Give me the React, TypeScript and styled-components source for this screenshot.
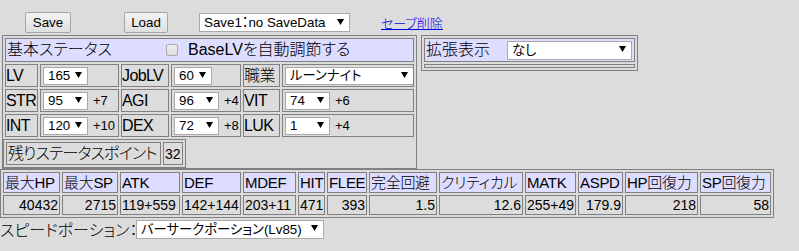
import React from 'react';
import styled, { createGlobalStyle } from 'styled-components';

const FONT = `"Liberation Sans", "Noto Sans CJK JP", sans-serif`;

const GlobalStyle = createGlobalStyle`
  html, body {
    margin: 0;
    padding: 0;
    background: #dcdcdc;
  }
  body {
    font-family: ${FONT};
    font-size: 16px;
    font-weight: 300;
    font-feature-settings: "palt";
    color: #000;
  }
`;

const Page = styled.div`
  width: 799px;
  height: 251px;
  overflow: hidden;
`;

const Toolbar = styled.div`
  display: flex;
  align-items: center;
  height: 21px;
  padding: 12px 0 0 25px;
`;

const Button = styled.button<{ $w: number; $gap?: number }>`
  box-sizing: border-box;
  flex: none;
  width: ${p => p.$w}px;
  height: 21px;
  margin: 0 0 0 ${p => p.$gap ?? 0}px;
  padding: 0;
  border: 1px solid #a6a6a6;
  border-radius: 2px;
  background: linear-gradient(#f3f3f3, #dfdfdf);
  font: 13.33px ${FONT};
  color: #000;
`;

const DeleteLink = styled.a`
  margin-left: 31px;
  font-size: 13px;
  color: #0000ee;
  text-decoration: underline;
`;

const SelectWrap = styled.span<{ $w: number; $h: number; $gap?: number }>`
  position: relative;
  display: inline-flex;
  flex: none;
  width: ${p => p.$w}px;
  height: ${p => p.$h}px;
  margin-left: ${p => p.$gap ?? 0}px;
`;

const NativeSelect = styled.select`
  appearance: none;
  box-sizing: border-box;
  width: 100%;
  height: 100%;
  margin: 0;
  padding: 0 14px 0 4px;
  border: 1px solid #a9a9a9;
  border-radius: 0;
  background: #fff;
  color: #000;
  font: 13.33px ${FONT};
  font-feature-settings: "palt";
  outline: none;
`;

const Caret = styled.svg`
  position: absolute;
  right: 6px;
  top: 50%;
  margin-top: -4px;
  width: 7px;
  height: 6px;
  pointer-events: none;
`;

type SelectProps = { w: number; h?: number; gap?: number; value: string };

const Select: React.FC<SelectProps> = ({ w, h = 18, gap, value }) => (
  <SelectWrap $w={w} $h={h} $gap={gap}>
    <NativeSelect defaultValue={value}>
      <option>{value}</option>
    </NativeSelect>
    <Caret viewBox="0 0 7 6">
      <polygon points="0,0 7,0 3.5,6" fill="#000" />
    </Caret>
  </SelectWrap>
);

const Columns = styled.div`
  display: flex;
  align-items: flex-start;
  gap: 4px;
  margin: 2px 0 0 2px;
`;

const Frame = styled.div`
  border: 1px solid #808080;
`;

const StatusGrid = styled.div`
  display: grid;
  grid-template-columns: 33px 79px 48px 70px 37px 132px;
  grid-template-rows: 24px repeat(3, 23px);
  gap: 2px;
  padding: 2px;
`;

const ExtGrid = styled.div`
  display: grid;
  grid-template-columns: 211px;
  grid-template-rows: 24px 4px;
  gap: 2px;
  padding: 2px;
`;

const Cell = styled.div<{ $head?: boolean; $span?: number; $pad?: number }>`
  box-sizing: border-box;
  display: flex;
  align-items: center;
  grid-column: span ${p => p.$span ?? 1};
  min-width: 0;
  padding: 0 0 0 ${p => p.$pad ?? 1}px;
  border: 1px solid #808080;
  background: ${p => (p.$head ? '#ddddff' : 'transparent')};
  white-space: nowrap;
  overflow: hidden;
  line-height: 18px;
`;

const Label = styled(Cell)`
  padding-left: 0;
  letter-spacing: -0.6px;
`;

const Title = styled.span<{ $w: number }>`
  flex: none;
  width: ${p => p.$w}px;
`;

const Check = styled.input`
  appearance: none;
  flex: none;
  box-sizing: border-box;
  width: 12px;
  height: 12px;
  margin: 0;
  border: 1px solid #a8a8a8;
  border-radius: 2px;
  background: linear-gradient(#eeeeee, #dddddd);
`;

const CheckLabel = styled.span`
  margin-left: 10px;
`;

const Bonus = styled.span`
  margin-left: 5px;
  font-size: 13px;
`;

const RemainTable = styled.div`
  display: flex;
  gap: 2px;
  width: fit-content;
  padding: 2px;
  border: 1px solid #808080;
`;

const RemainCell = styled.div<{ $w: number; $small?: boolean }>`
  box-sizing: border-box;
  display: flex;
  align-items: center;
  width: ${p => p.$w}px;
  height: 23px;
  padding-left: 1px;
  border: 1px solid #808080;
  font-size: ${p => (p.$small ? 14 : 16)}px;
  letter-spacing: ${p => (p.$small ? 0 : -0.9)}px;
  white-space: nowrap;
  overflow: hidden;
  line-height: 18px;
`;

const ParamGrid = styled.div<{ $cols: string }>`
  display: grid;
  grid-template-columns: ${p => p.$cols};
  grid-template-rows: 21px 20px;
  gap: 2px;
  width: fit-content;
  padding: 2px;
  border: 1px solid #808080;
`;

const ParamHead = styled.div`
  box-sizing: border-box;
  display: flex;
  align-items: center;
  padding-left: 1px;
  border: 1px solid #808080;
  background: #ddddff;
  font-size: 15px;
  letter-spacing: -0.3px;
  white-space: nowrap;
  overflow: hidden;
  line-height: 18px;
`;

const ParamValue = styled.div<{ $align: 'left' | 'right' }>`
  box-sizing: border-box;
  display: flex;
  align-items: center;
  justify-content: ${p => (p.$align === 'left' ? 'flex-start' : 'flex-end')};
  padding: 0 1px;
  border: 1px solid #808080;
  font-size: 14px;
  white-space: nowrap;
  overflow: hidden;
  line-height: 18px;
`;

const SpeedRow = styled.div`
  display: flex;
  align-items: center;
  height: 20px;
  margin-top: 1px;
`;

const SpeedLabel = styled.span`
  flex: none;
  width: 136px;
  white-space: nowrap;
`;

const stats = [
  [
    { label: 'STR', value: '95', bonus: '+7' },
    { label: 'AGI', value: '96', bonus: '+4' },
    { label: 'VIT', value: '74', bonus: '+6' },
  ],
  [
    { label: 'INT', value: '120', bonus: '+10' },
    { label: 'DEX', value: '72', bonus: '+8' },
    { label: 'LUK', value: '1', bonus: '+4' },
  ],
];

const params: { label: string; value: string; w: number; align: 'left' | 'right' }[] = [
  { label: '最大HP', value: '40432', w: 57, align: 'right' },
  { label: '最大SP', value: '2715', w: 56, align: 'right' },
  { label: 'ATK', value: '119+559', w: 60, align: 'left' },
  { label: 'DEF', value: '142+144', w: 59, align: 'left' },
  { label: 'MDEF', value: '203+11', w: 53, align: 'left' },
  { label: 'HIT', value: '471', w: 27, align: 'left' },
  { label: 'FLEE', value: '393', w: 40, align: 'right' },
  { label: '完全回避', value: '1.5', w: 68, align: 'right' },
  { label: 'クリティカル', value: '12.6', w: 84, align: 'right' },
  { label: 'MATK', value: '255+49', w: 51, align: 'left' },
  { label: 'ASPD', value: '179.9', w: 45, align: 'right' },
  { label: 'HP回復力', value: '218', w: 73, align: 'right' },
  { label: 'SP回復力', value: '58', w: 71, align: 'right' },
];

const App: React.FC = () => {
  return (
    <Page>
      <GlobalStyle />
      <Toolbar>
        <Button $w={46}>Save</Button>
        <Button $w={44} $gap={53}>Load</Button>
        <Select w={151} h={19} gap={31} value="Save1：no SaveData" />
        <DeleteLink href="#">セーブ削除</DeleteLink>
      </Toolbar>

      <Columns>
        <Frame>
          <StatusGrid>
            <Cell $head $span={6}>
              <Title $w={159}>基本ステータス</Title>
              <Check type="checkbox" />
              <CheckLabel>BaseLVを自動調節する</CheckLabel>
            </Cell>

            <Label>LV</Label>
            <Cell $pad={2}>
              <Select w={45} value="165" />
            </Cell>
            <Label>JobLV</Label>
            <Cell $pad={2}>
              <Select w={38} value="60" />
            </Cell>
            <Label>職業</Label>
            <Cell $pad={2}>
              <Select w={129} value="ルーンナイト" />
            </Cell>

            {stats.map(row =>
              row.map(s => (
                <React.Fragment key={s.label}>
                  <Label>{s.label}</Label>
                  <Cell $pad={2}>
                    <Select w={45} value={s.value} />
                    <Bonus>{s.bonus}</Bonus>
                  </Cell>
                </React.Fragment>
              ))
            )}
          </StatusGrid>
          <RemainTable>
            <RemainCell $w={155}>残りステータスポイント</RemainCell>
            <RemainCell $w={20} $small>32</RemainCell>
          </RemainTable>
        </Frame>

        <Frame>
          <ExtGrid>
            <Cell $head>
              <Title $w={81}>拡張表示</Title>
              <Select w={125} h={19} value="なし" />
            </Cell>
            <Cell />
          </ExtGrid>
        </Frame>
      </Columns>

      <ParamGrid $cols={params.map(p => `${p.w}px`).join(' ')}>
        {params.map(p => (
          <ParamHead key={p.label}>{p.label}</ParamHead>
        ))}
        {params.map(p => (
          <ParamValue key={p.label} $align={p.align}>
            {p.value}
          </ParamValue>
        ))}
      </ParamGrid>

      <SpeedRow>
        <SpeedLabel>スピードポーション：</SpeedLabel>
        <Select w={188} h={19} value="バーサークポーション(Lv85)" />
      </SpeedRow>
    </Page>
  );
};

export default App;
